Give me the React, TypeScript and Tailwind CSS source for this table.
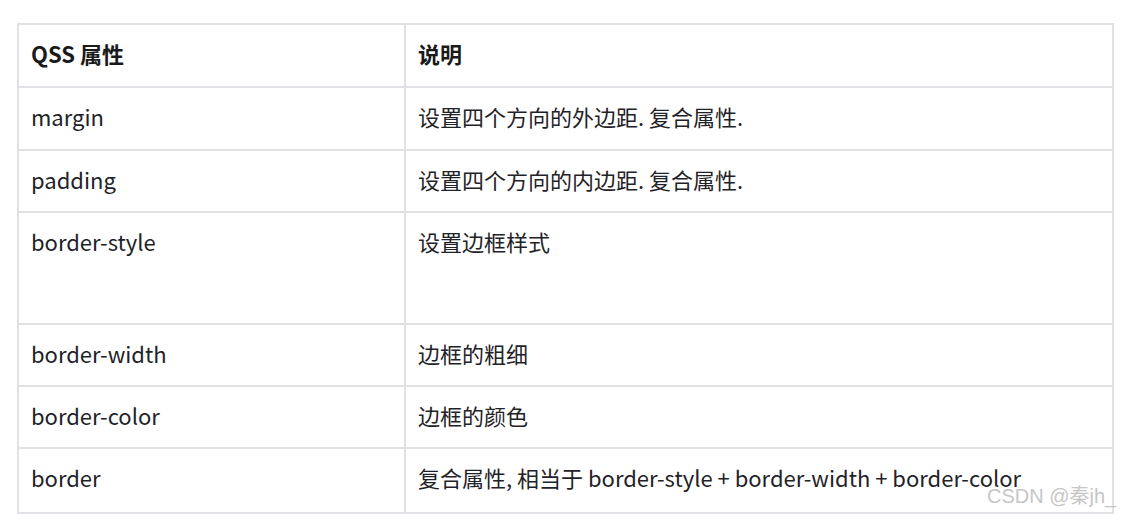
import React from "react";

type Row = { prop: string; desc: string; height: string };

const ROWS: Row[] = [
  { prop: "margin", desc: "设置四个方向的外边距. 复合属性.", height: "h-[63px]" },
  { prop: "padding", desc: "设置四个方向的内边距. 复合属性.", height: "h-[62px]" },
  { prop: "border-style", desc: "设置边框样式", height: "h-[112px]" },
  { prop: "border-width", desc: "边框的粗细", height: "h-[62px]" },
  { prop: "border-color", desc: "边框的颜色", height: "h-[62px]" },
  {
    prop: "border",
    desc: "复合属性, 相当于 border-style + border-width + border-color",
    height: "h-[65px]",
  },
];

export default function App() {
  return (
    <div className="relative h-[520px] w-[1122px] overflow-hidden bg-white pl-[17px] pt-[23px] font-['Noto_Sans_CJK_SC',sans-serif] text-[22px] text-[#1f2328]">
      <table className="w-[1097px] table-fixed border-collapse">
        <colgroup>
          <col className="w-[387px]" />
          <col />
        </colgroup>
        <thead>
          <tr className="h-[63px]">
            <HeadCell>QSS 属性</HeadCell>
            <HeadCell>说明</HeadCell>
          </tr>
        </thead>
        <tbody>
          {ROWS.map((row) => (
            <tr key={row.prop} className={row.height}>
              <BodyCell>{row.prop}</BodyCell>
              <BodyCell>{row.desc}</BodyCell>
            </tr>
          ))}
        </tbody>
      </table>

      {/* watermark stamped over the table */}
      <span className="absolute left-[987px] top-[484px] font-['Liberation_Sans','Noto_Sans_CJK_SC',sans-serif] text-[20px] leading-[24px] text-[#c6c6c6]">
        CSDN @秦jh_
      </span>
    </div>
  );
}

function HeadCell({ children }: { children: React.ReactNode }) {
  return (
    <th className="border-2 border-[#e0e0e5] px-[12px] pt-[13px] text-left align-top font-bold leading-[30px] text-[#1a1a1a]">
      {children}
    </th>
  );
}

function BodyCell({ children }: { children: React.ReactNode }) {
  return (
    <td className="border-2 border-[#e0e0e5] px-[12px] pt-[13px] align-top leading-[30px] whitespace-nowrap">
      {children}
    </td>
  );
}
